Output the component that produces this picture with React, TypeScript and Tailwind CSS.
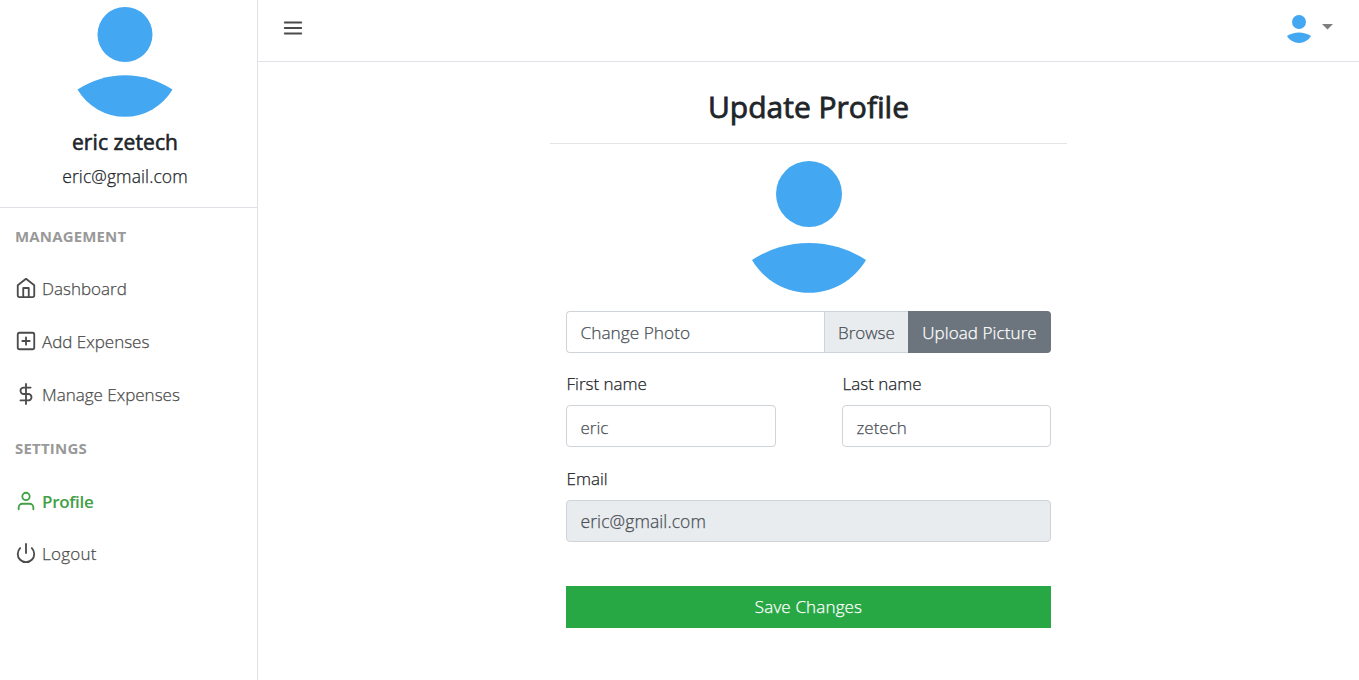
import type { ReactNode } from 'react';

function Avatar({ className }: { className: string }) {
  return (
    <svg viewBox="0 0 132 132" className={className} fill="#43a7f1">
      <circle cx="66" cy="33" r="33" />
      <path d="M9 99A104 104 0 0 1 123 99A66 66 0 0 1 9 99Z" />
    </svg>
  );
}

function Icon({ children }: { children: ReactNode }) {
  return (
    <svg
      viewBox="0 0 24 24"
      className="mb-px size-[22px] shrink-0"
      fill="none"
      stroke="currentColor"
      strokeWidth="2"
      strokeLinecap="round"
      strokeLinejoin="round"
    >
      {children}
    </svg>
  );
}

function NavItem({ icon, label, className }: { icon: ReactNode; label: string; className: string }) {
  return (
    <a href="#" className={`flex items-center gap-[5px] pl-[15px] ${className}`}>
      <Icon>{icon}</Icon>
      <span>{label}</span>
    </a>
  );
}

function Sidebar() {
  return (
    <aside className="flex w-[258px] shrink-0 flex-col border-r border-[#dee2e6]">
      <div className="flex h-[208px] flex-col items-center border-b border-[#dee2e6] pt-[7px] pr-[7px]">
        <Avatar className="size-[110px]" />
        <h5 className="mt-[11px] text-[21px] leading-[28px] font-normal tracking-[0.1px] [-webkit-text-stroke:0.6px]">
          eric zetech
        </h5>
        <p className="mt-[7px] text-[17.5px] leading-[27px] tracking-[0.1px]">eric@gmail.com</p>
      </div>
      <div className="flex h-[54px] items-center pt-[2px] pl-[15px] text-[15px] font-bold tracking-[0.15px] text-[#999] [-webkit-text-stroke:0px]">
        MANAGEMENT
      </div>
      <NavItem
        label="Dashboard"
        className="h-[53px] text-[#4b4b4b]"
        icon={
          <>
            <path d="M3 9l9-7 9 7v11a2 2 0 0 1-2 2H5a2 2 0 0 1-2-2z" />
            <path d="M9 22V12h6v10" />
          </>
        }
      />
      <NavItem
        label="Add Expenses"
        className="h-[53px] text-[#4b4b4b]"
        icon={
          <>
            <rect x="3" y="3" width="18" height="18" rx="2" />
            <path d="M12 8v8M8 12h8" />
          </>
        }
      />
      <NavItem
        label="Manage Expenses"
        className="h-[53px] text-[#4b4b4b]"
        icon={<path d="M12 1v22M17 5H9.5a3.5 3.5 0 0 0 0 7h5a3.5 3.5 0 0 1 0 7H6" />}
      />
      <div className="flex h-[54px] items-center pt-px pl-[15px] text-[15px] font-bold tracking-[0.2px] text-[#999] [-webkit-text-stroke:0px]">
        SETTINGS
      </div>
      <NavItem
        label="Profile"
        className="h-[53px] font-semibold tracking-[-0.3px] text-[#43a047] [-webkit-text-stroke:0px]"
        icon={
          <>
            <path d="M20 21v-2a4 4 0 0 0-4-4H8a4 4 0 0 0-4 4v2" />
            <circle cx="12" cy="7" r="4" />
          </>
        }
      />
      <NavItem
        label="Logout"
        className="h-[51px] tracking-[0.25px] text-[#4b4b4b]"
        icon={<path d="M18.36 6.64a9 9 0 1 1-12.73 0M12 2v10" />}
      />
    </aside>
  );
}

function TopBar() {
  return (
    <header className="flex h-[62px] items-start justify-between border-b border-[#dee2e6] pr-[26px] pl-[24px]">
      <button className="mt-[17px] text-[#4b4b4b]">
        <Icon>
          <path d="M3 12h18M3 6h18M3 18h18" />
        </Icon>
      </button>
      <div className="mt-[15px] flex gap-[9px]">
        <Avatar className="size-[28px]" />
        <svg viewBox="0 0 11 6" className="mt-[9px] h-[6px] w-[11px]" fill="#7f7f7f">
          <path d="M0 0H11L5.5 5.5Z" />
        </svg>
      </div>
    </header>
  );
}

function Field({ label, value, disabled }: { label: string; value: string; disabled?: boolean }) {
  return (
    <label className="flex flex-col">
      <span className="h-[34px] pl-[0.5px] leading-[26px]">{label}</span>
      <input
        className="h-[42px] w-full rounded border border-[#ced4da] px-[13.5px] pt-[2px] text-[#495057] disabled:bg-[#e9ecef] disabled:pt-0 disabled:text-[17.5px] disabled:tracking-[0.1px]"
        defaultValue={value}
        disabled={disabled}
      />
    </label>
  );
}

export default function App() {
  return (
    <div className="flex h-[680px] w-full overflow-hidden bg-white font-['Open_Sans',sans-serif] text-[17px] font-light text-[#212529] [-webkit-text-stroke:0.25px]">
      <Sidebar />
      <main className="flex flex-1 flex-col">
        <TopBar />
        <section className="mx-auto flex w-[517px] flex-col">
          <h3 className="mt-[25px] text-center text-[30px] leading-[40px] font-normal [-webkit-text-stroke:0.8px]">
            Update Profile
          </h3>
          <hr className="mt-4 border-[#e5e5e5]" />
          <form className="flex flex-col px-4">
            <Avatar className="mt-[17px] size-[132px] self-center" />
            <div className="mt-[18px] flex h-[42px] items-stretch">
              <div className="flex flex-1 items-center rounded-l border border-r-0 border-[#ced4da] pt-[2px] pl-[13.5px] text-[17.3px] text-[#495057]">
                Change Photo
              </div>
              <div className="flex w-[84px] items-center justify-center border border-r-0 border-[#ced4da] bg-[#e9ecef] pt-[2px] text-[#495057]">
                Browse
              </div>
              <button type="button" className="w-[143px] rounded-r bg-[#6c757d] pt-[2px] tracking-[0.1px] text-white">
                Upload Picture
              </button>
            </div>
            <div className="mt-[18px] grid grid-cols-[210px_209px] justify-between">
              <Field label="First name" value="eric" />
              <Field label="Last name" value="zetech" />
            </div>
            <div className="mt-[19px]">
              <Field label="Email" value="eric@gmail.com" disabled />
            </div>
            <button type="button" className="mt-[44px] h-[42px] bg-[#28a745] tracking-[0.15px] text-white">
              Save Changes
            </button>
          </form>
        </section>
      </main>
    </div>
  );
}
